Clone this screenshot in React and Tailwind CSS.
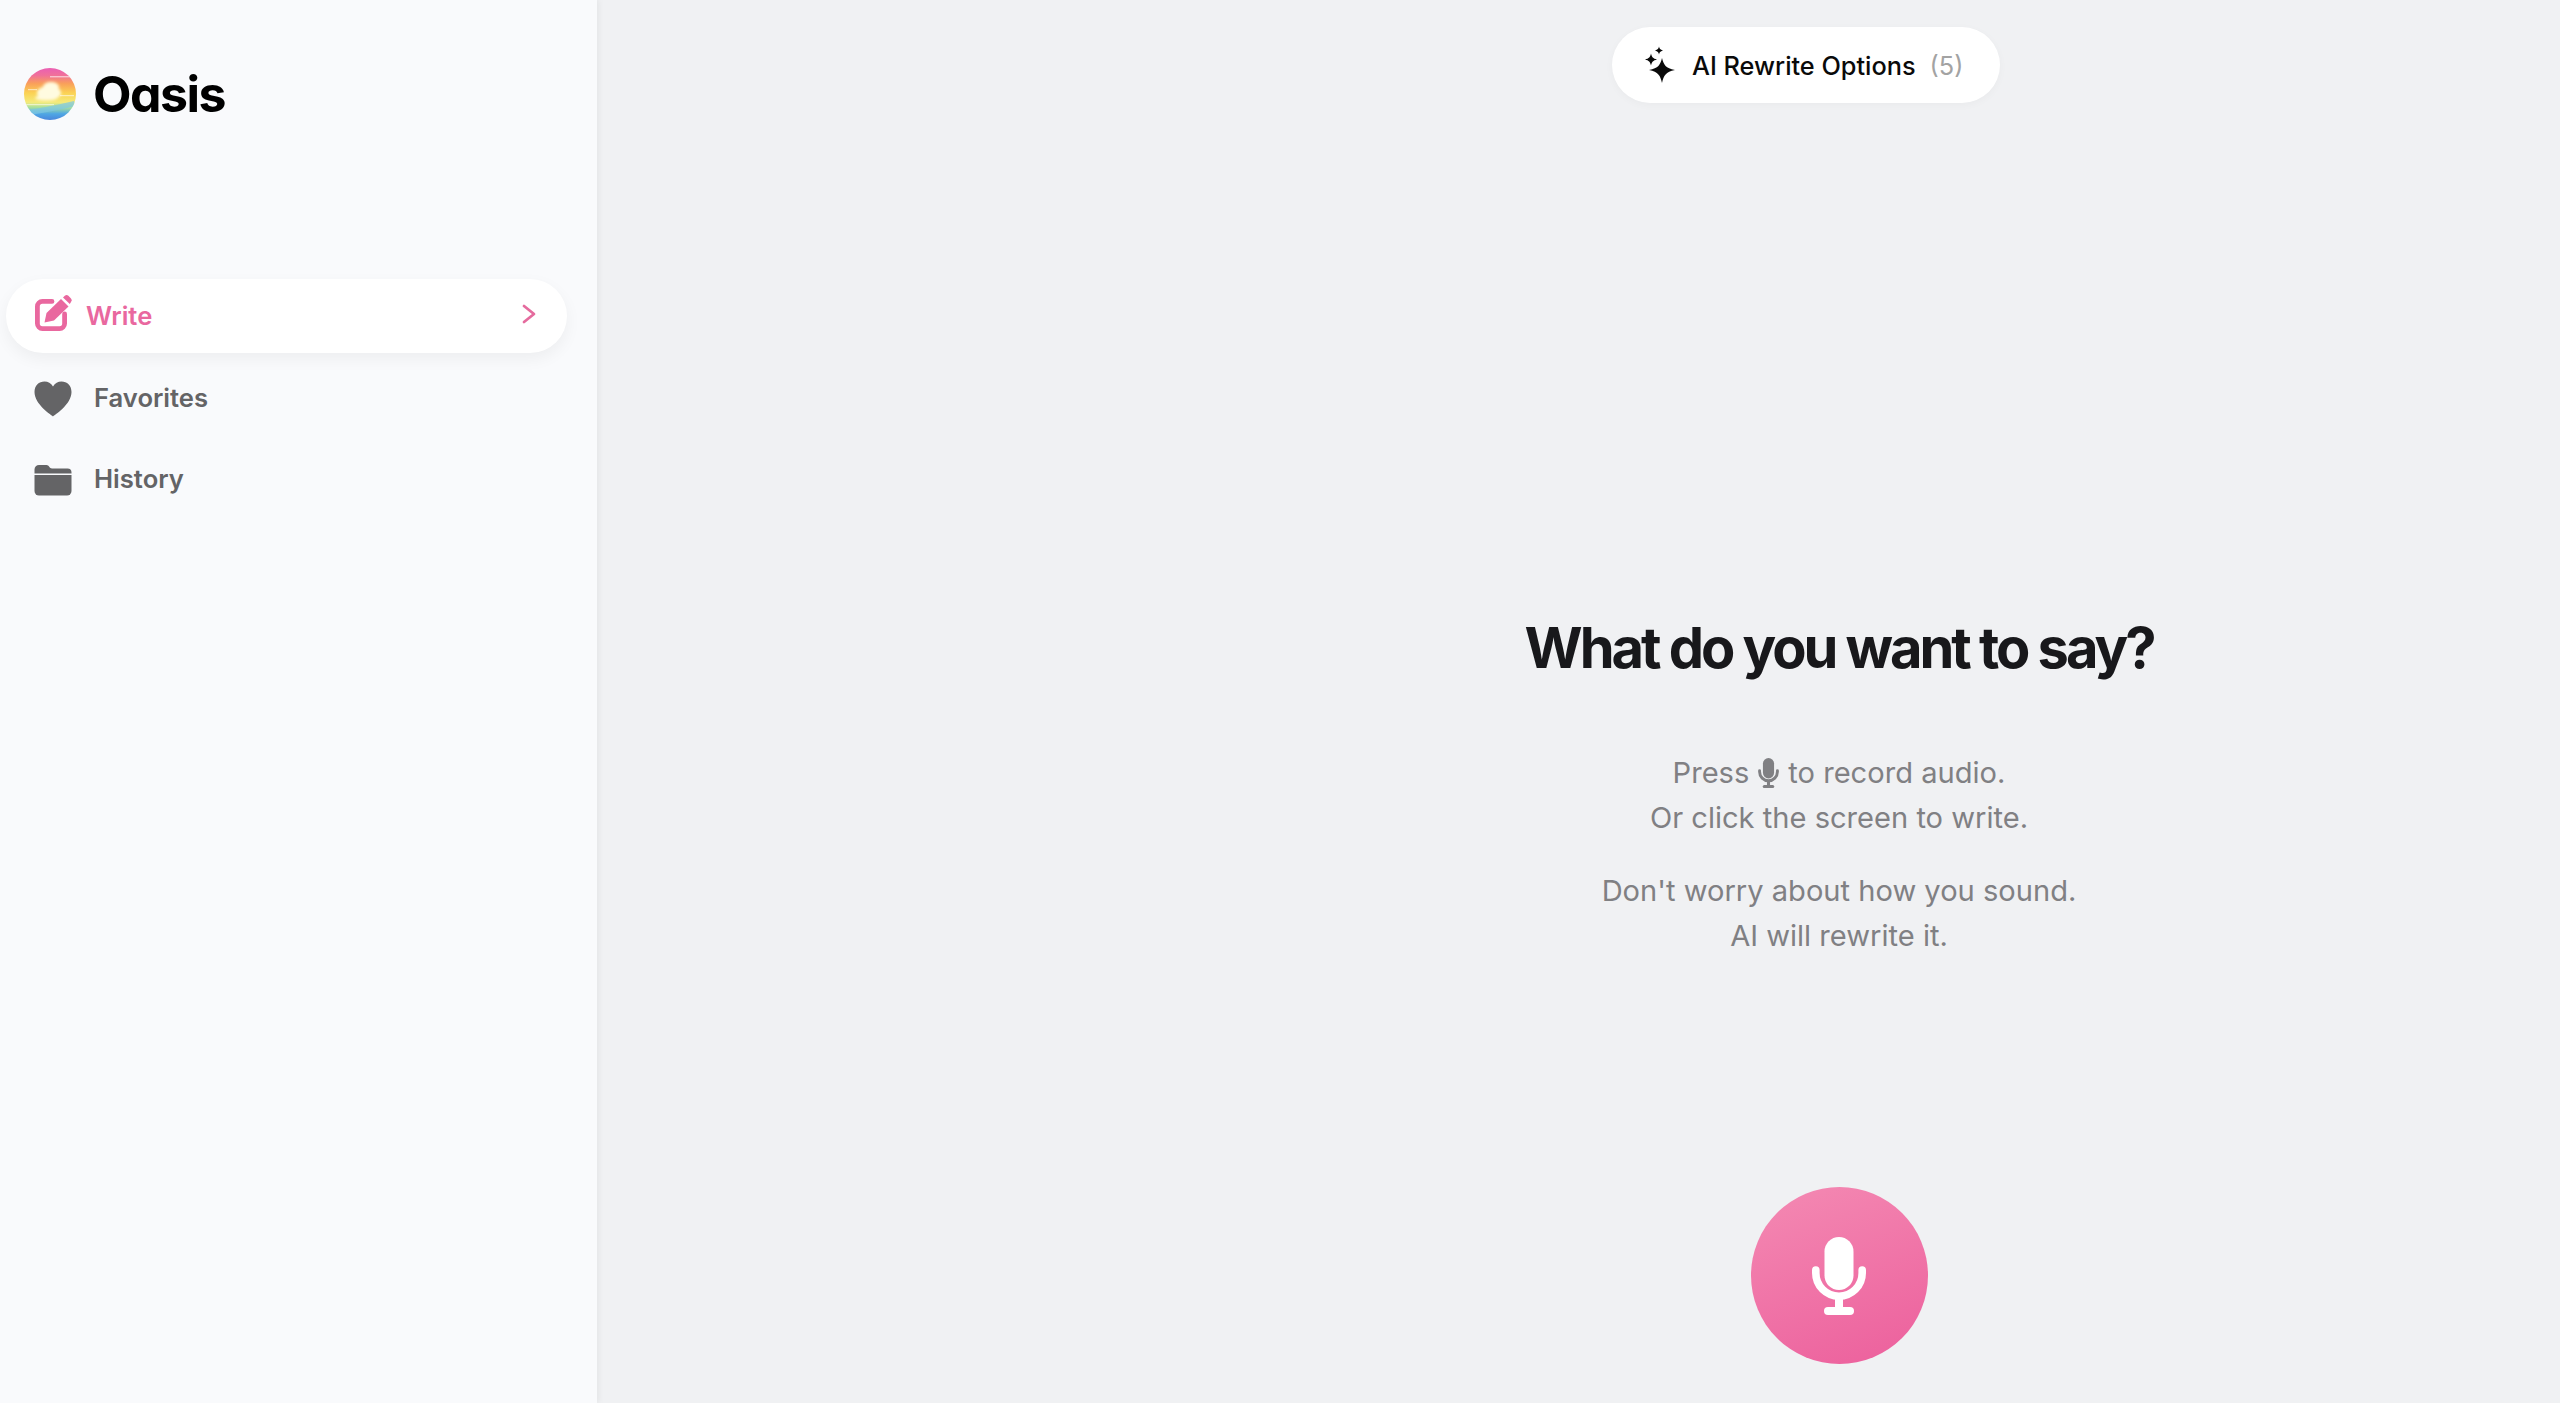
import React from "react";

function Logo() {
  return (
    <svg width="52" height="52" viewBox="0 0 52 52" className="shrink-0">
      <defs>
        <linearGradient id="sky" x1="0" y1="0" x2="0" y2="1">
          <stop offset="0" stopColor="#ea5fb4" />
          <stop offset="0.14" stopColor="#f0709a" />
          <stop offset="0.3" stopColor="#f9a05a" />
          <stop offset="0.48" stopColor="#fbd254" />
          <stop offset="0.66" stopColor="#f4ea7a" />
          <stop offset="0.76" stopColor="#a5dfa0" />
          <stop offset="0.88" stopColor="#4fa7e4" />
          <stop offset="1" stopColor="#4a86dc" />
        </linearGradient>
        <clipPath id="disc"><circle cx="26" cy="26" r="26" /></clipPath>
        <filter id="soft" x="-30%" y="-30%" width="160%" height="160%"><feGaussianBlur stdDeviation="1.6" /></filter>
        <filter id="softer" x="-30%" y="-30%" width="160%" height="160%"><feGaussianBlur stdDeviation="0.7" /></filter>
      </defs>
      <g clipPath="url(#disc)">
        <rect width="52" height="52" fill="url(#sky)" />
        <g filter="url(#soft)" fill="#fffbe0">
          <ellipse cx="25" cy="25" rx="12" ry="7" />
          <ellipse cx="27" cy="19" rx="8" ry="5" />
          <ellipse cx="22" cy="30" rx="11" ry="2.5" />
        </g>
        <g filter="url(#softer)" fill="#ffffff" opacity="0.55">
          <rect x="26" y="8" width="20" height="1.4" />
          <rect x="4" y="21" width="9" height="1.2" />
          <rect x="36" y="27" width="14" height="1.2" />
          <rect x="0" y="36" width="30" height="1.2" />
        </g>
        <path d="M2 42 Q20 40 50 33 L52 38 Q26 44 6 47 Z" fill="#7cc6e6" opacity="0.7" filter="url(#softer)" />
      </g>
    </svg>
  );
}

function EditIcon() {
  return (
    <svg width="38" height="38" viewBox="0 0 38 38" className="mb-[6px] shrink-0" fill="none">
      <path d="M17 7.400H7.400A5 5 0 0 0 2.400 12.400V29.600A5 5 0 0 0 7.400 34.600H24.600A5 5 0 0 0 29.600 29.600V20" stroke="#e9689f" strokeWidth="4.800" strokeLinecap="round" />
      <path d="M9.500 28.500L11.500 19L26 5L33.500 12.500L19 26.500Z" fill="#e9689f" />
      <path d="M28 3.500L29.800 1.800A2.600 2.600 0 0 1 33.400 1.800L36 4.400A2.600 2.600 0 0 1 36 8L34.800 10Z" fill="#e9689f" />
    </svg>
  );
}

function HeartIcon() {
  return (
    <svg width="38" height="36" viewBox="0 0 38 36" className="shrink-0">
      <path d="M19 35.500C17.500 34 0.500 23.500 0.500 11C0.500 4.500 5 0.500 10.500 0.500C14 0.500 17 2.200 19 5.500C21 2.200 24 0.500 27.500 0.500C33 0.500 37.500 4.500 37.500 11C37.500 23.500 20.500 34 19 35.500Z" fill="#646466" />
    </svg>
  );
}

function FolderIcon() {
  return (
    <svg width="38" height="32" viewBox="0 0 38 32" className="shrink-0">
      <path d="M0.500 5.500A4.500 4.500 0 0 1 5 1H12.500C15 1 15.500 4.500 18 4.500H33.500A4 4 0 0 1 37.500 8.500V9.500H0.500Z" fill="#646466" />
      <path d="M0.500 11H37.500V27A4.500 4.500 0 0 1 33 31.500H5A4.500 4.500 0 0 1 0.500 27Z" fill="#646466" />
    </svg>
  );
}

function Sparkles() {
  return (
    <svg width="32" height="38" viewBox="0 0 32 38" className="shrink-0" fill="#0a0a0a">
      <path d="M18 12C19.800 19 21.500 22 31 24C21.500 26 19.800 29.500 18 37C16.200 29.500 14.500 26 5 24C14.500 22 16.200 19 18 12Z" />
      <path d="M7 7.500C7.800 11 9 12.500 13 13.500C9 14.500 7.800 16 7 19.500C6.200 16 5 14.500 1 13.500C5 12.500 6.200 11 7 7.500Z" />
      <path d="M15 0.500C15.500 2.800 16.200 3.600 19 4.500C16.200 5.400 15.500 6.200 15 8.500C14.500 6.200 13.800 5.400 11 4.500C13.800 3.600 14.500 2.800 15 0.500Z" />
    </svg>
  );
}

function MicIcon({ className, color }) {
  return (
    <svg viewBox="0 0 54 78" className={className} fill="none">
      <rect x="12.500" y="0" width="29" height="53" rx="14.500" fill={color} />
      <path d="M3.800 33V36A23.200 23.200 0 0 0 50.200 36V33" stroke={color} strokeWidth="7.600" strokeLinecap="round" />
      <path d="M27 60V72" stroke={color} strokeWidth="8" />
      <path d="M16 74H38" stroke={color} strokeWidth="8" strokeLinecap="round" />
    </svg>
  );
}

export default function App() {
  return (
    <div className="flex h-[1403px] w-[2560px] overflow-hidden bg-[#f0f1f3] font-['Inter',sans-serif]">
      <aside className="flex w-[597px] shrink-0 flex-col bg-[#f9fafc] shadow-[2px_0_6px_rgba(0,0,0,0.05)]">
        <div className="flex items-center gap-[17px] pl-6 pt-[68px]">
          <Logo />
          <span className="text-[50px] leading-[52px] font-bold tracking-[-0.03em] text-black [font-feature-settings:'cv11']">Oasis</span>
        </div>
        <nav className="mt-[159px] flex flex-col">
          <div className="ml-[6px] mr-[30px] flex h-[74px] items-center rounded-full bg-white pl-[29px] pr-[31px] shadow-[0_6px_16px_rgba(0,0,0,0.05)]">
            <EditIcon />
            <span className="ml-[13px] text-[25.600px] font-semibold text-[#e9689f]">Write</span>
            <svg width="14" height="20" viewBox="0 0 14 20" className="mb-[4px] ml-auto" fill="none">
              <path d="M2 2L12 10L2 18" stroke="#e56b9e" strokeWidth="2.800" strokeLinecap="round" strokeLinejoin="round" />
            </svg>
          </div>
          <div className="mt-[8px] flex h-[75px] items-center pl-[34px]">
            <HeartIcon />
            <span className="ml-[22px] text-[25.600px] font-semibold text-[#646466]">Favorites</span>
          </div>
          <div className="mt-[6px] flex h-[75px] items-center pl-[34px]">
            <FolderIcon />
            <span className="ml-[22px] text-[25.600px] font-semibold text-[#646466]">History</span>
          </div>
        </nav>
      </aside>
      <main className="flex flex-1 flex-col items-center pl-[521px]">
        <button className="mr-[66px] mt-[27px] flex h-[76px] w-[388px] shrink-0 items-center rounded-full bg-white pl-[32px] shadow-[0_2px_8px_rgba(0,0,0,0.03)]">
          <Sparkles />
          <span className="ml-[16px] mt-[1px] text-[25.300px] font-medium text-[#0a0a0a]">AI Rewrite Options</span>
          <span className="ml-[14px] mt-[1px] text-[25.300px] text-[#a3a3a3]">(5)</span>
        </button>
        <h1 className="mt-[505px] text-[56px] leading-[80px] font-bold tracking-[-0.054em] text-[#18181b]">What do you want to say?</h1>
        <div className="mt-[63px] text-center text-[29.100px] leading-[44.500px] text-[#808083]">
          <p className="flex items-center justify-center">Press<MicIcon className="mx-[9px] h-[30px] w-[21px]" color="#808083" />to record audio.</p>
          <p>Or click the screen to write.</p>
          <p className="mt-[29px]">Don't worry about how you sound.</p>
          <p>AI will rewrite it.</p>
        </div>
        <button className="mt-[229px] flex h-[177px] w-[177px] shrink-0 items-center justify-center rounded-full bg-[linear-gradient(160deg,#f48ab3,#ec5f9c)]">
          <MicIcon className="h-[78px] w-[54px]" color="#ffffff" />
        </button>
      </main>
    </div>
  );
}
